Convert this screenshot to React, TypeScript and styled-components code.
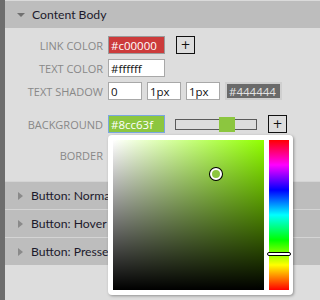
import React from 'react';
import styled, { createGlobalStyle } from 'styled-components';

const GlobalStyle = createGlobalStyle`
  html, body {
    margin: 0;
    padding: 0;
    background: #dddddd;
  }
  body {
    font-family: "Open Sans", "Noto Sans", sans-serif;
  }
`;

const Page = styled.div`
  display: flex;
  width: 320px;
  height: 300px;
  overflow: hidden;
  background: #dddddd;
`;

const SideStrip = styled.div`
  width: 5px;
  flex: none;
  background: #6d6d6d;
`;

const Main = styled.div`
  flex: 1;
  display: flex;
  flex-direction: column;
`;

const SectionHeader = styled.div<{ first?: boolean }>`
  height: 27px;
  flex: none;
  display: flex;
  align-items: center;
  gap: 7px;
  padding-left: 12px;
  background: #bdbdbd;
  border-top: 1px solid ${(p) => (p.first ? '#dadada' : '#d4d4d4')};
  color: #1c1a2c;
  font-family: Lato, "Open Sans", sans-serif;
  font-size: 12.2px;
  white-space: nowrap;
`;

const Arrow = styled.span<{ open?: boolean }>`
  width: 0;
  height: 0;
  flex: none;
  ${(p) =>
    p.open
      ? `border-left: 4px solid transparent;
         border-right: 4px solid transparent;
         border-top: 4px solid #707070;
         margin-top: 1px;`
      : `border-top: 4px solid transparent;
         border-bottom: 4px solid transparent;
         border-left: 5px solid #8a8a8a;
         margin-left: 1px;
         margin-right: 1px;`}
`;

const Body = styled.div`
  padding: 8px 8px 13px 12px;
  display: flex;
  flex-direction: column;
  height: 153px;
  box-sizing: border-box;
`;

const Row = styled.div`
  display: grid;
  grid-template-columns: 86px 1fr;
  column-gap: 5px;
  align-items: center;
  height: 18px;
  margin-bottom: 5px;
`;

const Label = styled.div`
  text-align: right;
  color: #888888;
  font-size: 11px;
  text-transform: uppercase;
  white-space: nowrap;
`;

const Controls = styled.div`
  display: flex;
  align-items: center;
  gap: 5px;
  position: relative;
`;

const Field = styled.div<{ w: number; bg?: string; fg?: string; edge?: string; thick?: boolean }>`
  width: ${(p) => p.w}px;
  height: 18px;
  box-sizing: border-box;
  flex: none;
  display: flex;
  align-items: center;
  padding-left: 2px;
  background: ${(p) => p.bg || '#ffffff'};
  color: ${(p) => p.fg || '#111111'};
  border: ${(p) => (p.thick ? 2 : 1)}px solid ${(p) => p.edge || '#a8a8a8'};
  font-family: "Open Sans", "Noto Sans", sans-serif;
  font-size: 11.5px;
  white-space: nowrap;
  overflow: hidden;
`;

const PlusButton = styled.div<{ gapLeft: number }>`
  width: 19px;
  height: 18px;
  box-sizing: border-box;
  margin-left: ${(p) => p.gapLeft}px;
  border: 1px solid #111111;
  display: flex;
  align-items: center;
  justify-content: center;
  font-family: "DejaVu Sans", sans-serif;
  font-size: 12px;
  color: #111111;
  line-height: 1;
`;

const Separator = styled.div`
  height: 2px;
  background: #efefef;
  margin: 2px 0 8px;
`;

const SliderTrack = styled.div`
  width: 82px;
  height: 11px;
  margin-left: 5px;
  box-sizing: border-box;
  border: 1px solid #5a5a5a;
  background: #dddddd;
  position: relative;
`;

const SliderThumb = styled.div`
  position: absolute;
  left: 43px;
  top: -3px;
  width: 16px;
  height: 15px;
  background: #8cc63f;
`;

const Popover = styled.div`
  position: absolute;
  left: 0;
  top: 20px;
  width: 185px;
  height: 160px;
  box-sizing: border-box;
  padding: 5px 4px 5px 5px;
  background: #ffffff;
  border-radius: 4px;
  box-shadow: 1px 1px 3px rgba(0, 0, 0, 0.35);
  display: flex;
  gap: 5px;
  z-index: 10;
`;

const SatValBox = styled.div<{ hue: string }>`
  width: 151px;
  height: 150px;
  position: relative;
  background: linear-gradient(to bottom, rgba(0, 0, 0, 0), #000000),
    linear-gradient(to right, #ffffff, ${(p) => p.hue});
`;

const SatValMarker = styled.div`
  position: absolute;
  width: 12px;
  height: 12px;
  border-radius: 50%;
  box-sizing: border-box;
  background: #8cc63f;
  border: 2px solid #ffffff;
  box-shadow: 0 0 0 1px #000000;
  transform: translate(-50%, -50%);
`;

const HueBar = styled.div`
  width: 20px;
  height: 150px;
  position: relative;
  background: linear-gradient(to bottom, #ff0000, #ff00ff, #0000ff, #00ffff, #00ff00, #ffff00, #ff0000);
`;

const HueHandle = styled.div`
  position: absolute;
  left: -2px;
  width: 24px;
  height: 4px;
  box-sizing: border-box;
  background: #ffffff;
  border: 1px solid #000000;
  border-radius: 2px;
  transform: translateY(-50%);
`;

const Spacer = styled.div`
  flex: 1;
`;

const collapsed = ['Button: Normal', 'Button: Hover', 'Button: Pressed'];

export default function App() {
  // #8cc63f in hsv: h 86, s 0.68, v 0.78
  const sat = 0.68;
  const val = 0.776;
  const hue = 86;
  return (
    <>
      <GlobalStyle />
      <Page>
        <SideStrip />
        <Main>
          <SectionHeader first>
            <Arrow open />
            Content Body
          </SectionHeader>
          <Body>
            <Row>
              <Label>Link Color</Label>
              <Controls>
                <Field w={57} bg="#cc3b3b" fg="#ffffff" edge="#9a9a9a">#c00000</Field>
                <PlusButton gapLeft={6}>+</PlusButton>
              </Controls>
            </Row>
            <Row>
              <Label>Text Color</Label>
              <Controls>
                <Field w={57}>#ffffff</Field>
              </Controls>
            </Row>
            <Row>
              <Label>Text Shadow</Label>
              <Controls>
                <Field w={34}>0</Field>
                <Field w={34}>1px</Field>
                <Field w={34}>1px</Field>
                <Field w={57} bg="#6a6a6a" fg="#e4e4e4" edge="#cfcfcf" thick>#444444</Field>
              </Controls>
            </Row>
            <Separator />
            <Row>
              <Label>Background</Label>
              <Controls>
                <Field w={57} bg="#8cc63f" fg="#ffffff" edge="#7aa6e0">#8cc63f</Field>
                <SliderTrack>
                  <SliderThumb />
                </SliderTrack>
                <PlusButton gapLeft={6}>+</PlusButton>
                <Popover>
                  <SatValBox hue={`hsl(${hue}, 100%, 50%)`}>
                    <SatValMarker style={{ left: `${sat * 100}%`, top: `${(1 - val) * 100}%` }} />
                  </SatValBox>
                  <HueBar>
                    <HueHandle style={{ top: `${((360 - hue) / 360) * 100}%` }} />
                  </HueBar>
                </Popover>
              </Controls>
            </Row>
            <Separator />
            <Row>
              <Label>Border</Label>
              <Controls />
            </Row>
          </Body>
          {collapsed.map((title) => (
            <SectionHeader key={title}>
              <Arrow />
              {title}
            </SectionHeader>
          ))}
          <Spacer />
        </Main>
      </Page>
    </>
  );
}
